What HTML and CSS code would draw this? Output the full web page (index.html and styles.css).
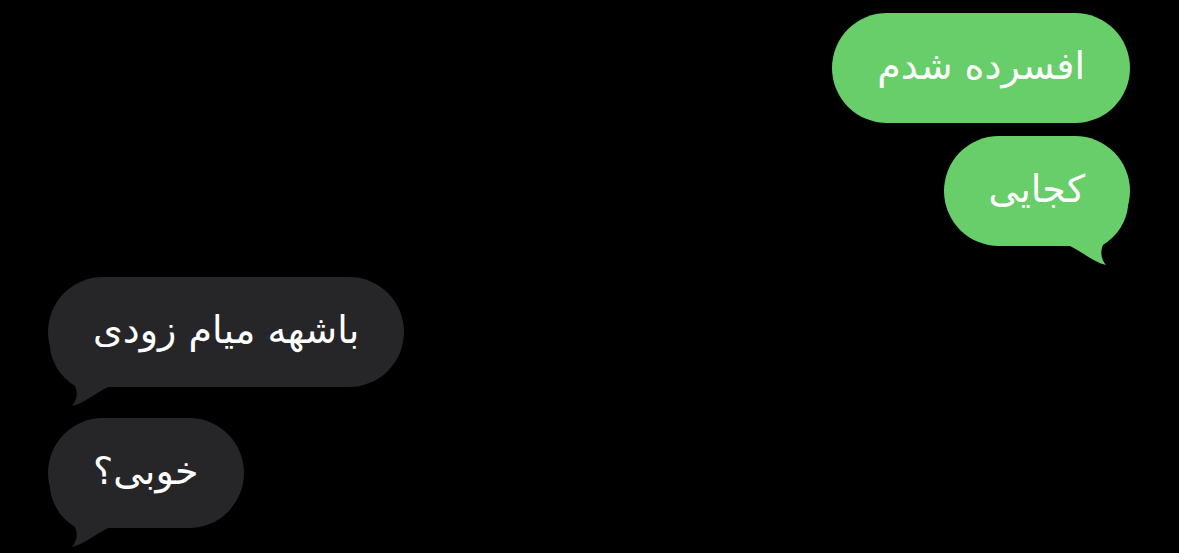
FILE: index.html
```html
<!DOCTYPE html>
<html lang="fa">
<head>
<meta charset="utf-8">
<title>Chat</title>
<link rel="stylesheet" href="styles.css">
</head>
<body>
<div class="chat">
  <div class="row sent">
    <div class="bubble green" dir="rtl">افسرده شدم</div>
  </div>
  <div class="row sent tailed">
    <div class="bubble green" dir="rtl">کجایی<svg class="tail tail-right" viewBox="0 0 60 60" width="60" height="60"><path d="M2 0 C3 14 12 30 27 39 C30 46 29 53 24 59 C34 57 45 48 60 40 L60 0 Z"/></svg></div>
  </div>
  <div class="row received tailed">
    <div class="bubble grey" dir="rtl">باشهه میام زودی<svg class="tail tail-left" viewBox="0 0 60 60" width="60" height="60"><path d="M2 0 C3 14 12 30 27 39 C30 46 29 53 24 59 C34 57 45 48 60 40 L60 0 Z"/></svg></div>
  </div>
  <div class="row received tailed">
    <div class="bubble grey" dir="rtl">خوبی؟<svg class="tail tail-left" viewBox="0 0 60 60" width="60" height="60"><path d="M2 0 C3 14 12 30 27 39 C30 46 29 53 24 59 C34 57 45 48 60 40 L60 0 Z"/></svg></div>
  </div>
</div>
</body>
</html>
```
FILE: styles.css
```css
html, body {
  margin: 0;
  padding: 0;
  background: #000;
  height: 100%;
}
body {
  font-family: "DejaVu Sans", sans-serif;
  overflow: hidden;
}
.chat {
  display: flex;
  flex-direction: column;
  gap: 13px;
  padding: 13px 49px 0 48px;
}
.row {
  display: flex;
}
.row.sent {
  justify-content: flex-end;
}
.row.received {
  justify-content: flex-start;
}
.row.tailed {
  margin-bottom: 18px;
}
.bubble {
  position: relative;
  height: 110px;
  line-height: 106px;
  padding: 0 45px;
  border-radius: 55px;
  font-size: 38px;
  color: #fff;
  white-space: nowrap;
  box-sizing: border-box;
}
.green {
  background: #67ce6a;
}
.green .tail {
  fill: #67ce6a;
}
.grey {
  background: #262629;
}
.grey .tail {
  fill: #262629;
}
.tail {
  position: absolute;
  bottom: -20px;
  display: block;
}
.tail-left {
  left: 0;
}
.tail-right {
  right: 0;
  transform: scaleX(-1);
}
```
